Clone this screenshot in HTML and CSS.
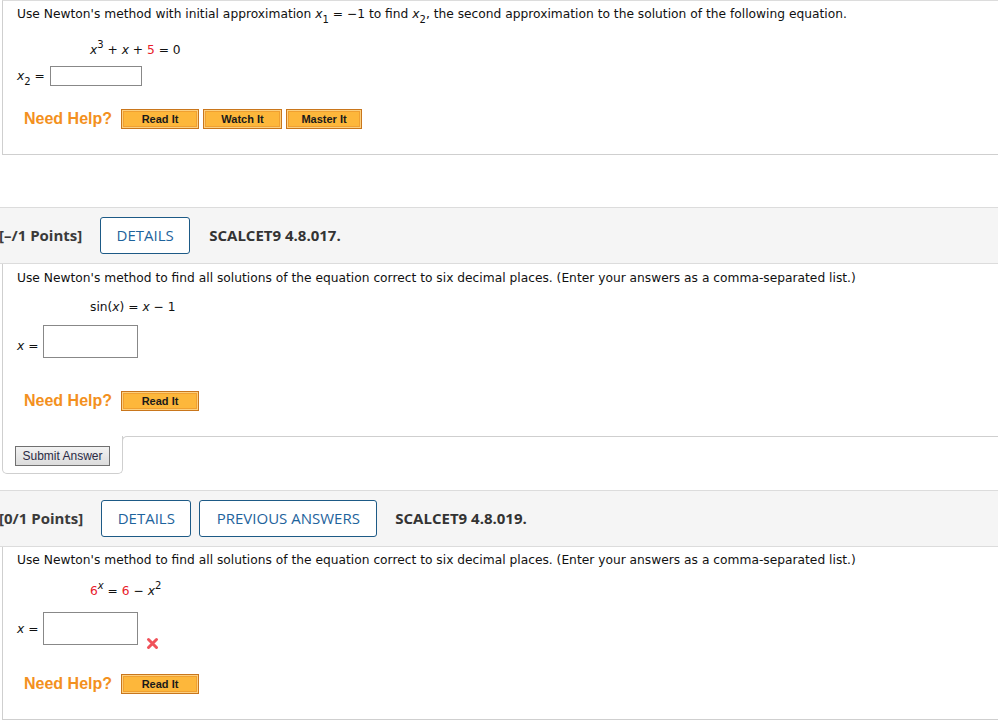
FILE: index.html
```html
<!DOCTYPE html>
<html>
<head>
<meta charset="utf-8">
<link rel="stylesheet" href="styles.css">
</head>
<body>
<div class="page">

  <div class="qbox q1">
    <p class="intro">Use Newton's method with initial approximation <i>x</i><sub>1</sub> = −1 to find <i>x</i><sub>2</sub>, the second approximation to the solution of the following equation.</p>
    <p class="eq eq1"><i>x</i><sup>3</sup> + <i>x</i> + <span class="red">5</span> = 0</p>
    <div class="ansrow ans1"><span class="lbl"><i>x</i><sub>2</sub> =</span><span class="inp small"></span></div>
    <div class="help help1"><span class="needhelp">Need Help?</span><span class="hbtn">Read It</span><span class="hbtn">Watch It</span><span class="hbtn">Master It</span></div>
  </div>

  <div class="hdr hdr2">
    <span class="pts">[–/1 Points]</span>
    <span class="dbtn details">DETAILS</span>
    <span class="code">SCALCET9 4.8.017.</span>
  </div>
  <div class="qbox q2">
    <p class="intro">Use Newton's method to find all solutions of the equation correct to six decimal places. (Enter your answers as a comma-separated list.)</p>
    <p class="eq eq2">sin(<i>x</i>) = <i>x</i> − 1</p>
    <div class="ansrow ans2"><span class="lbl"><i>x</i> =</span><span class="inp big"></span></div>
    <div class="help help2"><span class="needhelp">Need Help?</span><span class="hbtn">Read It</span></div>
  </div>
  <div class="submitrow">
    <div class="tab"><span class="submit">Submit Answer</span></div>
    <div class="filler"></div>
  </div>

  <div class="hdr hdr3">
    <span class="pts">[0/1 Points]</span>
    <span class="dbtn details">DETAILS</span>
    <span class="dbtn prev">PREVIOUS ANSWERS</span>
    <span class="code">SCALCET9 4.8.019.</span>
  </div>
  <div class="qbox q3">
    <p class="intro">Use Newton's method to find all solutions of the equation correct to six decimal places. (Enter your answers as a comma-separated list.)</p>
    <p class="eq eq3"><span class="red">6</span><sup><i>x</i></sup> = <span class="red">6</span> − <i>x</i><sup>2</sup></p>
    <div class="ansrow ans3"><span class="lbl"><i>x</i> =</span><span class="inp big"></span>
      <svg class="xmark" width="13" height="13" viewBox="0 0 13 13"><path d="M2.5 2.5 L10.5 10.5 M10.5 2.5 L2.5 10.5" stroke="#f0525a" stroke-width="3" stroke-linecap="round"/></svg>
    </div>
    <div class="help help3"><span class="needhelp">Need Help?</span><span class="hbtn">Read It</span></div>
  </div>

</div>
</body>
</html>
```

FILE: styles.css
```css
html, body { margin: 0; padding: 0; background: #fff; }
body { font-family: "DejaVu Sans", Verdana, sans-serif; font-size: 12.25px; color: #111; }
.page { margin-left: 2px; width: 996px; }
p { margin: 0; }
i { font-style: italic; }
sub, sup { font-size: 10px; line-height: 0; position: relative; vertical-align: baseline; }
sub { top: 5px; }
sup { top: -6px; }
.red { color: #e8202a; }

.qbox { border-left: 1px solid #cfcfcf; box-sizing: border-box; }
.q1 { border-top: 1px solid #dcdcdc; border-bottom: 1px solid #cfcfcf; height: 155px; padding-left: 14px; }
.q2 { height: 172px; padding-left: 14px; }
.q3 { border-bottom: 1px solid #cfcfcf; height: 173px; padding-left: 14px; }

.intro { line-height: 18px; }
.q1 .intro { padding-top: 4px; }
.q2 .intro { padding-top: 5px; }
.q3 .intro { padding-top: 4px; }
.eq { margin-left: 73px; line-height: 18px; }
.eq1 { margin-top: 18px; }
.eq2 { margin-top: 11px; }
.eq3 { margin-top: 13px; }

.ansrow { display: flex; align-items: flex-end; }
.lbl { line-height: 16px; }
.inp { display: inline-block; box-sizing: border-box; border: 1px solid #888; background: #fff; }
.inp.small { width: 92px; height: 20px; margin-left: 5px; }
.inp.big { width: 95px; height: 33px; margin-left: 5px; }
.ans1 { margin-top: 7px; }
.ans1 .lbl { padding-bottom: 2px; }
.ans2 { margin-top: 9px; }
.ans2 .lbl { padding-bottom: 4px; }
.ans3 { margin-top: 12px; }
.ans3 .lbl { padding-bottom: 8px; }
.xmark { margin-left: 8px; margin-bottom: -5px; }

.help { display: flex; align-items: center; margin-left: 7px; }
.help1 { margin-top: 23px; }
.help2 { margin-top: 33px; }
.help3 { margin-top: 29px; }
.needhelp { font-family: "Liberation Sans", Arial, sans-serif; font-weight: bold; font-size: 16px; color: #f39020; margin-right: 9px; line-height: 20px; }
.hbtn { display: inline-block; box-sizing: border-box; width: 78px; height: 20px; margin-right: 4px; border: 1px solid #c9761c; background: #fdb73b; box-shadow: inset 0 0 0 1px #fcd080, inset 0 0 0 2px #f0a030; font-family: "Liberation Sans", Arial, sans-serif; font-weight: bold; font-size: 11px; color: #1a1a1a; text-align: center; line-height: 18px; }
.help1 .hbtn:nth-child(3) { width: 79px; }
.help1 .hbtn:nth-child(4) { width: 76px; }

.hdr { display: flex; align-items: center; margin-left: -2px; box-sizing: border-box; height: 57px; background: #f5f5f5; border-top: 1px solid #dcdcdc; border-bottom: 1px solid #dcdcdc; font-family: "Open Sans", sans-serif; font-size: 15px; width: 998px; }
.hdr2 { margin-top: 52px; }
.hdr3 { margin-top: 16px; }
.pts { font-weight: 700; color: #3a3a3a; margin-left: -1px; margin-bottom: 2px; }
.dbtn { display: inline-block; box-sizing: border-box; height: 37px; line-height: 35px; padding: 0; text-align: center; border: 1px solid #1d5a86; border-radius: 3px; color: #1e639c; background: #fff; }
.details { margin-left: 18px; width: 90px; }
.prev { margin-left: 8px; width: 178px; }
.code { font-weight: 700; color: #333; margin-left: 19px; margin-bottom: 2px; }
.hdr3 .code { margin-left: 18px; }

.submitrow { display: flex; }
.tab { box-sizing: border-box; width: 121px; height: 38px; border-left: 1px solid #cfcfcf; border-right: 1px solid #cfcfcf; border-bottom: 1px solid #cfcfcf; border-bottom-left-radius: 5px; border-bottom-right-radius: 5px; padding: 10px 0 0 12px; }
.filler { flex: 1; height: 6px; margin-left: -1px; border-top: 1px solid #cfcfcf; border-left: 1px solid #cfcfcf; border-top-left-radius: 5px; }
.submit { display: inline-block; box-sizing: border-box; width: 95px; height: 20px; border: 1px solid #707070; background: linear-gradient(#f2f2f2, #dcdcdc); font-family: "Liberation Sans", Arial, sans-serif; font-size: 12px; color: #2a2a44; text-align: center; line-height: 18px; }
```
